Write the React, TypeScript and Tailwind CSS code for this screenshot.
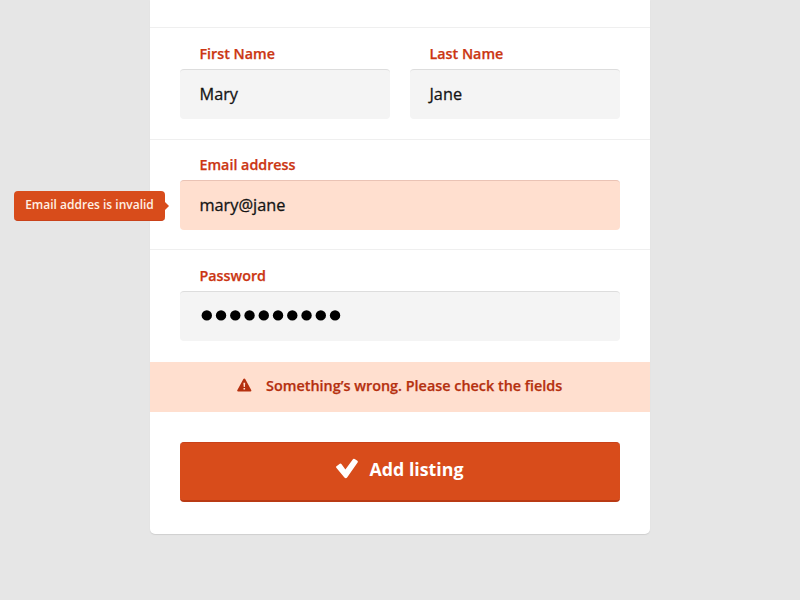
import type { ReactNode } from "react";

function Label({ children }: { children: ReactNode }) {
  return (
    <div className="ml-[19.5px] h-5 text-[14.3px] leading-5 font-semibold whitespace-nowrap text-[#cb3613] [-webkit-text-stroke:0.25px_#cb3613]">
      {children}
    </div>
  );
}

function Input({ children, invalid }: { children: ReactNode; invalid?: boolean }) {
  return (
    <div
      className={
        "mt-[5px] flex h-[50px] items-center rounded-[4px] border-t pb-px pl-[19.5px] text-[16.3px] font-medium text-[#141414] [-webkit-text-stroke:0.3px_#141414] " +
        (invalid ? "border-[#eac3b5] bg-[#ffdfcf]" : "border-[#dddddd] bg-[#f4f4f4]")
      }
    >
      {children}
    </div>
  );
}

function Warning() {
  return (
    <svg width="15" height="14" viewBox="0 0 15 14" className="relative -top-px shrink-0">
      <path d="M7.3 .5c.4 0 .7.2.9.6l6 11c.4.8.1 1.4-.8 1.4H1.2c-.9 0-1.3-.6-.8-1.4l6-11c.2-.4.5-.6.9-.6z" fill="#b5300f" />
      <path d="M6.4 4.7h1.8L7.9 9H6.7zM6.5 10h1.6v1.6H6.5z" fill="#ffdfcf" />
    </svg>
  );
}

function Check() {
  return (
    <svg width="22" height="21" viewBox="0 0 22 21" className="relative -top-px shrink-0">
      <path
        d="M.5 8.3 3.8 5.7Q4.7 5.1 5.4 6L9.4 11.5 17.1 1.1Q17.8.3 18.7.9L21.4 2.8Q22.2 3.5 21.6 4.4L11.3 19.3Q10.6 20.3 9.8 20.3 9 20.3 8.2 19.3L.3 9.8Q-.3 8.9.5 8.3z"
        fill="#fff"
      />
    </svg>
  );
}

export default function App() {
  return (
    <div className="h-[600px] w-[800px] overflow-hidden bg-[#e6e6e6] font-['Open_Sans','Noto_Sans',sans-serif]">
      <main className="mx-auto h-[534px] w-[500px] rounded-b-[5px] bg-white shadow-[0_1px_1px_#cfcfcf]">
        <div className="h-[27px]" />
        <section className="flex h-[112px] gap-5 border-t border-[#efefef] px-[30px] pt-4">
          <div className="flex-1">
            <Label>First Name</Label>
            <Input>Mary</Input>
          </div>
          <div className="flex-1">
            <Label>Last Name</Label>
            <Input>Jane</Input>
          </div>
        </section>
        <section className="relative h-[110px] border-t border-[#efefef] px-[30px] pt-[15px]">
          <Label>Email address</Label>
          <Input invalid>mary@jane</Input>
          <div className="absolute top-[51px] -left-[136.5px] flex h-[30px] w-[151px] items-center justify-center rounded-[4px] border-b border-[#c9421a] bg-[#d84c1b] pb-px pl-px text-[12px] font-semibold whitespace-nowrap text-[#fff0e4]">
            Email addres is invalid
            <svg className="absolute top-[10px] -right-[4.5px]" width="5" height="10" viewBox="0 0 5 10">
              <path d="M0 0 5 5 0 10z" fill="#d84c1b" />
            </svg>
          </div>
        </section>
        <section className="h-[113px] border-t border-[#efefef] px-[30px] pt-4">
          <Label>Password</Label>
          <Input>
            <svg width="144" height="12" viewBox="0 0 144 12" fill="#000">
              {Array.from({ length: 10 }, (_, i) => (
                <circle key={i} cx={6.8 + i * 14.25} cy="5.4" r="5.2" />
              ))}
            </svg>
          </Input>
        </section>
        <div className="flex h-[50px] items-center bg-[#ffdfcf] pb-[2px] pl-[87px] text-[14.4px] font-semibold whitespace-nowrap text-[#b5300f]">
          <Warning />
          <span className="-mt-px ml-[14px] [-webkit-text-stroke:0.25px_#b5300f]">Something’s wrong. Please check the fields</span>
        </div>
        <button className="mt-[30px] ml-[30px] flex h-[60px] w-[440px] items-center rounded-[4px] border-t border-b-2 border-t-[#c9421a] border-b-[#b93a14] bg-[#d84c1b] pb-[4px] pl-[156px] text-[17.8px] font-bold whitespace-nowrap text-white">
          <Check />
          <span className="ml-[11.5px]">Add listing</span>
        </button>
      </main>
    </div>
  );
}
